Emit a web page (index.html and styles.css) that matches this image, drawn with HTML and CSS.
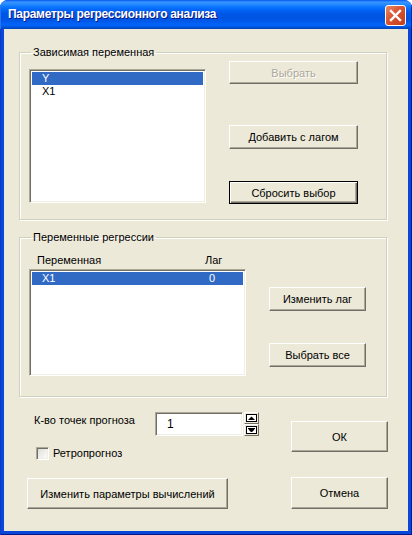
FILE: index.html
```html
<!DOCTYPE html>
<html lang="ru">
<head>
<meta charset="utf-8">
<title>Параметры регрессионного анализа</title>
<link rel="stylesheet" href="styles.css">
</head>
<body>
<div class="window">
  <div class="titlebar">
    <span class="title">Параметры регрессионного анализа</span>
    <button class="close" aria-label="Закрыть">
      <svg width="19" height="19" viewBox="0 0 19 19"><path d="M5 5 L14 14 M14 5 L5 14" stroke="#fff" stroke-width="2.4" stroke-linecap="square"/></svg>
    </button>
  </div>
  <div class="frame">
    <div class="client">
      <fieldset class="group group-dep">
        <legend>Зависимая переменная</legend>
        <div class="group-body dep-body">
          <div class="listbox sunken lb-dep">
            <div class="item selected">Y</div>
            <div class="item">X1</div>
          </div>
          <div class="btn-col dep-btns">
            <button class="btn disabled b-select">Выбрать</button>
            <button class="btn b-lag">Добавить с лагом</button>
            <button class="btn default b-reset">Сбросить выбор</button>
          </div>
        </div>
      </fieldset>

      <fieldset class="group group-reg">
        <legend>Переменные регрессии</legend>
        <div class="group-body reg-body">
          <div class="reg-list">
            <div class="lv-header"><span>Переменная</span><span>Лаг</span></div>
            <div class="listbox sunken lb-reg">
              <div class="lv-row selected"><span>X1</span><span>0</span></div>
            </div>
          </div>
          <div class="btn-col reg-btns">
            <button class="btn b-chlag">Изменить лаг</button>
            <button class="btn b-all">Выбрать все</button>
          </div>
        </div>
      </fieldset>

      <div class="bottom">
        <div class="bottom-left">
          <div class="forecast-row">
            <span class="forecast-label">К-во точек прогноза</span>
            <div class="edit sunken">1</div>
            <div class="spin-btns">
              <button class="spin-btn" aria-label="Больше">
                <svg width="11" height="8" viewBox="0 0 11 8"><rect x="0.5" y="0.5" width="10" height="7" fill="#fff" stroke="#000"/><path d="M2 6 L5.5 2.5 L9 6 Z" fill="#000"/></svg>
              </button>
              <button class="spin-btn" aria-label="Меньше">
                <svg width="11" height="8" viewBox="0 0 11 8"><rect x="0.5" y="0.5" width="10" height="7" fill="#fff" stroke="#000"/><path d="M2 2.5 H9 M3 3.5 L5.5 6 L8 3.5 Z" stroke="#000" fill="#000" stroke-width="1"/></svg>
              </button>
            </div>
          </div>
          <label class="check-row"><span class="checkbox"></span><span>Ретропрогноз</span></label>
          <button class="btn b-params">Изменить параметры вычислений</button>
        </div>
        <div class="bottom-right">
          <button class="btn b-ok">ОК</button>
          <button class="btn b-cancel">Отмена</button>
        </div>
      </div>
    </div>
  </div>
</div>
</body>
</html>
```

FILE: styles.css
```css
* { box-sizing: border-box; }

html, body {
  margin: 0;
  padding: 0;
  background: #ffffff;
}

body {
  font-family: "Liberation Sans", Arial, sans-serif;
  font-size: 11px;
  color: #000;
}

.window {
  width: 412px;
  height: 535px;
  display: flex;
  flex-direction: column;
  border-radius: 8px 8px 0 0;
  overflow: hidden;
  background: #0a4be8;
}

.titlebar {
  height: 29px;
  flex: none;
  display: flex;
  align-items: flex-start;
  padding: 0 6px 0 8px;
  background: linear-gradient(to bottom,
    #0058ee 0px, #3a93ff 2px, #288eff 4px, #127dff 6px, #0369fb 9px,
    #0058e8 13px, #0054e3 18px, #0057e8 21px, #0263f8 24px, #0264fb 25px,
    #0055de 27px, #0041b4 29px);
  box-shadow: inset 1px 0 0 #2a73f5, inset -1px 0 0 #0030b8;
}

.title {
  flex: 1;
  margin-top: 7px;
  color: #fff;
  font-weight: bold;
  font-size: 12px;
  letter-spacing: -0.3px;
  line-height: 15px;
  text-shadow: 1px 1px 0 #0a1883;
  white-space: nowrap;
}

.close {
  width: 21px;
  height: 21px;
  margin-top: 5px;
  padding: 0;
  border: 1px solid #fff;
  border-radius: 3px;
  background: linear-gradient(135deg, #e88a68 0%, #d8532f 45%, #c23f1c 100%);
  display: flex;
  align-items: center;
  justify-content: center;
}

.close svg { display: block; }

.frame {
  flex: 1;
  padding: 0 4px 4px 4px;
  background: #0847d8;
  box-shadow: inset 1px 0 0 #0a3bc8, inset -1px 0 0 #001e9a, inset 0 -1px 0 #001a8a;
}

.client {
  height: 100%;
  background: #ece9d8;
  display: flex;
  flex-direction: column;
}

/* group boxes */
.group {
  width: 368px;
  margin: 0 0 0 15px;
  padding: 0;
  min-width: 0;
  border: 1px solid #d0d0bf;
  box-shadow: inset 1px 1px 0 #fff, 1px 1px 0 #fff;
}

.group legend {
  margin-left: 11px;
  padding: 0 2px;
  font-size: 11px;
  line-height: 13px;
}

.group-dep { margin-top: 17px; }
.group-reg { margin-top: 11px; }

.group-body {
  display: flex;
  align-items: flex-start;
  padding-left: 9px;
}

.dep-body { padding-top: 2px; padding-bottom: 15px; }
.reg-body { padding-top: 10px; padding-bottom: 20px; }

/* sunken fields */
.sunken {
  background: #fff;
  border: 1px solid;
  border-color: #aca899 #fff #fff #aca899;
  box-shadow: inset 1px 1px 0 #716f64, inset -1px -1px 0 #f1efe2;
}

.listbox {
  padding: 2px;
}

.lb-dep {
  width: 177px;
  height: 134px;
  margin-top: 8px;
}

.item {
  height: 13px;
  line-height: 13px;
  padding-left: 10px;
}

.selected {
  background: #316ac5;
  color: #fff;
}

.reg-list { width: 217px; }

.lv-header {
  display: grid;
  grid-template-columns: 168px auto;
  padding-left: 8px;
  line-height: 13px;
}

.lb-reg {
  height: 107px;
  margin-top: 2px;
}

.lv-row {
  display: grid;
  grid-template-columns: 167px auto;
  padding-left: 10px;
  height: 13px;
  line-height: 13px;
}

/* buttons */
.btn {
  font-family: inherit;
  font-size: 11px;
  color: #000;
  padding: 0;
  background: #ece9d8;
  border: 1px solid;
  border-color: #fff #716f64 #716f64 #fff;
  box-shadow: inset -1px -1px 0 #aca899;
  border-radius: 0;
  display: flex;
  align-items: center;
  justify-content: center;
}

.btn.default {
  border: 1px solid #000;
  box-shadow: inset 1px 1px 0 #fff, inset -1px -1px 0 #716f64, inset -2px -2px 0 #aca899;
}

.btn.disabled {
  color: #aca899;
  text-shadow: 1px 1px 0 #fff;
}

.btn-col {
  display: flex;
  flex-direction: column;
  margin-left: 23px;
}

.dep-btns .btn { width: 129px; }
.b-select { height: 23px; }
.b-lag { height: 24px; margin-top: 41px; }
.b-reset { height: 23px; margin-top: 32px; }

.reg-btns .btn { width: 97px; height: 24px; }
.b-chlag { margin-top: 33px; }
.b-all { margin-top: 32px; }

/* bottom area */
.bottom {
  display: flex;
  align-items: flex-start;
  padding-left: 23px;
}

.bottom-left {
  width: 232px;
  display: flex;
  flex-direction: column;
  align-items: flex-start;
}

.forecast-row {
  display: flex;
  align-items: flex-start;
  margin-top: 15px;
}

.forecast-label {
  width: 128px;
  padding-left: 7px;
  margin-top: 2px;
  line-height: 13px;
}

.edit {
  width: 88px;
  height: 24px;
  padding-left: 11px;
  line-height: 22px;
  font-size: 12px;
}

.spin-btns {
  display: flex;
  flex-direction: column;
  margin-left: 1px;
}

.spin-btn {
  width: 15px;
  height: 12px;
  padding: 0;
  background: #ece9d8;
  border: 1px solid;
  border-color: #fff #716f64 #716f64 #fff;
  display: flex;
  align-items: center;
  justify-content: center;
}

.spin-btn svg { display: block; }

.check-row {
  display: flex;
  align-items: center;
  margin-top: 11px;
  padding-left: 9px;
  line-height: 13px;
}

.checkbox {
  width: 13px;
  height: 13px;
  margin-right: 4px;
  background: linear-gradient(135deg, #dcdbd5, #fff);
  border: 1px solid;
  border-color: #aca899 #fff #fff #aca899;
  box-shadow: inset 1px 1px 0 #716f64, inset -1px -1px 0 #f1efe2;
}

.b-params {
  width: 201px;
  height: 31px;
  margin-top: 18px;
}

.bottom-right {
  display: flex;
  flex-direction: column;
  margin-left: 32px;
}

.bottom-right .btn { width: 97px; }
.b-ok { height: 31px; margin-top: 24px; }
.b-cancel { height: 32px; margin-top: 25px; }
```
